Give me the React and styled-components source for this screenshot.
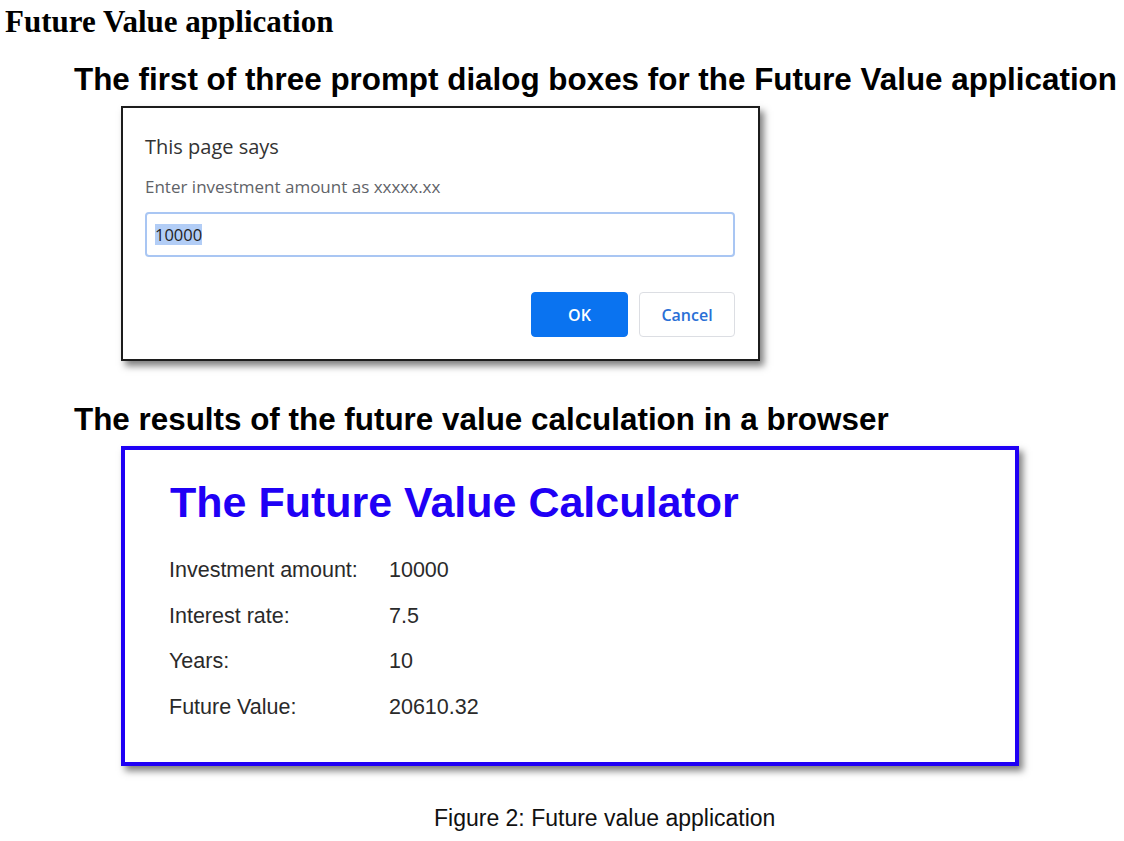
import React from 'react';
import styled, { createGlobalStyle } from 'styled-components';

const GlobalStyle = createGlobalStyle`
  body {
    margin: 0;
    background: #fff;
    color: #000;
  }
`;

const Page = styled.div`
  width: 1124px;
  min-height: 841px;
  padding-left: 5px;
  box-sizing: border-box;
`;

const DocTitle = styled.h1`
  margin: 5px 0 0;
  font-family: 'Liberation Serif', 'Times New Roman', serif;
  font-size: 31px;
  line-height: 34px;
  font-weight: 700;
`;

const Section = styled.div`
  padding-left: 69px;
  display: flex;
  flex-direction: column;
  align-items: flex-start;
`;

const Heading = styled.h2`
  margin: ${p => p.$top}px 0 9px;
  font-family: 'Liberation Sans', Arial, sans-serif;
  font-size: 31.4px;
  line-height: 34px;
  font-weight: 700;
  white-space: nowrap;
`;

const Dialog = styled.div`
  margin-left: 47px;
  width: 639px;
  height: 255px;
  box-sizing: border-box;
  border: 2px solid #1c1c1c;
  background: #fff;
  box-shadow: 4px 5px 7px rgba(0, 0, 0, 0.5);
  padding: 27px 23px 22px 22px;
  display: flex;
  flex-direction: column;
  font-family: 'Open Sans', 'Noto Sans', sans-serif;
`;

const DialogTitle = styled.div`
  font-size: 20px;
  line-height: 24px;
  color: #333;
`;

const DialogMessage = styled.div`
  margin-top: 18px;
  font-size: 17px;
  line-height: 20px;
  color: #5f6368;
`;

const PromptInput = styled.div`
  margin-top: 15px;
  height: 45px;
  box-sizing: border-box;
  border: 2px solid #a9c6f3;
  border-radius: 4px;
  padding: 0 8px;
  display: flex;
  align-items: center;
  font-size: 16.5px;
  color: #222;
`;

const Selection = styled.span`
  background: #b2cdf6;
  line-height: 21px;
`;

const ButtonRow = styled.div`
  margin-top: 35px;
  display: flex;
  justify-content: flex-end;
  gap: 11px;
`;

const Button = styled.div`
  width: ${p => p.$w}px;
  height: 45px;
  box-sizing: border-box;
  border-radius: 4px;
  display: flex;
  align-items: center;
  justify-content: center;
  font-size: 16px;
  font-weight: 600;
  background: ${p => (p.$primary ? '#0a73f0' : '#fff')};
  color: ${p => (p.$primary ? '#fff' : '#2a6fd6')};
  border: 1px solid ${p => (p.$primary ? '#0a73f0' : '#dcdee3')};
`;

const ResultBox = styled.div`
  margin-left: 47px;
  width: 898px;
  height: 320px;
  box-sizing: border-box;
  border: 4px solid #1f00f5;
  background: #fff;
  box-shadow: 4px 5px 7px rgba(0, 0, 0, 0.5);
  padding: 27px 0 0 44px;
  font-family: 'Liberation Sans', Arial, sans-serif;
`;

const CalcTitle = styled.div`
  font-size: 43px;
  line-height: 50px;
  font-weight: 700;
  color: #1f00f5;
  padding-left: 1px;
`;

const Rows = styled.div`
  margin-top: 31px;
  display: grid;
  grid-template-columns: 220px auto;
  row-gap: 21.7px;
  font-size: 21.5px;
  line-height: 24px;
  color: #2a2a2a;
`;

const Caption = styled.div`
  margin: 39px 0 0 429px;
  font-family: 'Liberation Sans', Arial, sans-serif;
  font-size: 23px;
  line-height: 26px;
  color: #111;
`;

const results = [
  ['Investment amount:', '10000'],
  ['Interest rate:', '7.5'],
  ['Years:', '10'],
  ['Future Value:', '20610.32'],
];

export default function App() {
  return (
    <Page>
      <GlobalStyle />
      <DocTitle>Future Value application</DocTitle>
      <Section>
        <Heading $top={24}>The first of three prompt dialog boxes for the Future Value application</Heading>
        <Dialog>
          <DialogTitle>This page says</DialogTitle>
          <DialogMessage>Enter investment amount as xxxxx.xx</DialogMessage>
          <PromptInput>
            <Selection>10000</Selection>
          </PromptInput>
          <ButtonRow>
            <Button $primary $w={97}>OK</Button>
            <Button $w={96}>Cancel</Button>
          </ButtonRow>
        </Dialog>
        <Heading $top={42}>The results of the future value calculation in a browser</Heading>
        <ResultBox>
          <CalcTitle>The Future Value Calculator</CalcTitle>
          <Rows>
            {results.map(([label, value]) => (
              <React.Fragment key={label}>
                <span>{label}</span>
                <span>{value}</span>
              </React.Fragment>
            ))}
          </Rows>
        </ResultBox>
      </Section>
      <Caption>Figure 2: Future value application</Caption>
    </Page>
  );
}
